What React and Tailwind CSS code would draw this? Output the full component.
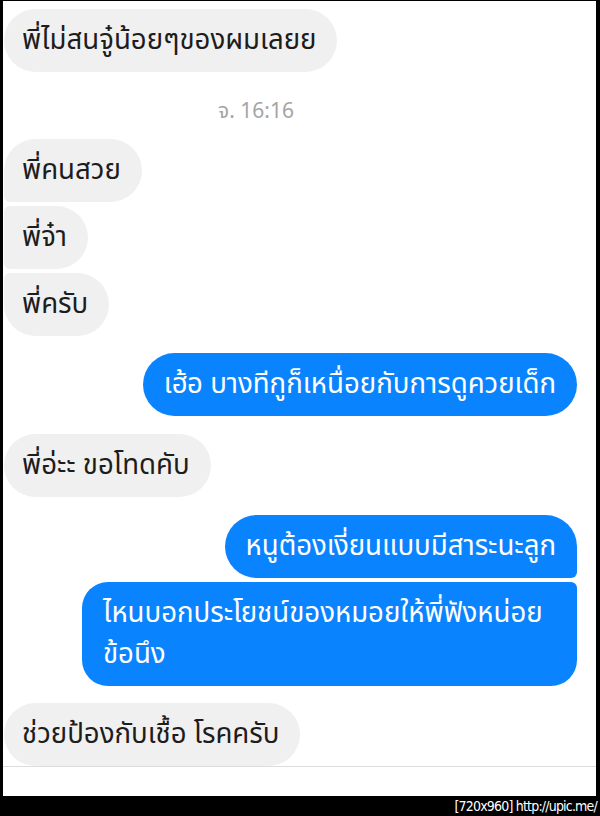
import React from "react";

const thai = { fontFamily: '"Noto Sans Thai", "Noto Sans", "DejaVu Sans", sans-serif' };

function Gray({ children, cls = "" }) {
  return (
    <div className="flex">
      <div className={`bg-[#f1f0f0] text-[#1d1d1d] text-[27.6px] leading-[41px] pl-[18px] pr-[21px] py-[11px] ${cls}`}>
        {children}
      </div>
    </div>
  );
}

function Blue({ children, cls = "" }) {
  return (
    <div className="flex justify-end pr-[19px]">
      <div className={`bg-[#0a84fe] text-white text-[27.6px] leading-[41px] pl-[21px] pr-[21px] py-[11px] ${cls}`}>
        {children}
      </div>
    </div>
  );
}

export default function App() {
  return (
    <div className="w-[600px] h-[816px] bg-black flex flex-col overflow-hidden" style={thai}>
      <div className="flex-1 mt-[1px] ml-[3px] mr-[4px] bg-white flex flex-col overflow-hidden">
        <div className="pl-[1px] pt-[8px] flex flex-col">
          <Gray cls="rounded-[32px]">พี่ไม่สนจู๋น้อยๆของผมเลยย</Gray>
          <div className="h-[28px] mt-[26px] mb-[13px] pl-[214px] text-[21px] leading-[28px] text-[#a5a5a5]">
            จ. 16:16
          </div>
          <div className="flex flex-col gap-[4px]">
            <Gray cls="rounded-[32px] rounded-bl-[6px]">พี่คนสวย</Gray>
            <Gray cls="rounded-[32px] rounded-l-[6px]">พี่จ๋า</Gray>
            <Gray cls="rounded-[32px] rounded-tl-[6px]">พี่ครับ</Gray>
          </div>
          <div className="mt-[17px]">
            <Blue cls="rounded-[32px]">เฮ้อ บางทีกูก็เหนื่อยกับการดูควยเด็ก</Blue>
          </div>
          <div className="mt-[18px]">
            <Gray cls="rounded-[32px]">พี่อ่ะะ ขอโทดคับ</Gray>
          </div>
          <div className="mt-[18px] flex flex-col gap-[4px]">
            <Blue cls="rounded-[32px] rounded-br-[6px]">หนูต้องเงี่ยนแบบมีสาระนะลูก</Blue>
            <Blue cls="w-[495px] rounded-[26px] rounded-tr-[6px]">
              ไหนบอกประโยชน์ของหมอยให้พี่ฟังหน่อย
              <br />
              ข้อนึง
            </Blue>
          </div>
          <div className="mt-[17px]">
            <Gray cls="rounded-[32px]">ช่วยป้องกับเชื้อ โรคครับ</Gray>
          </div>
        </div>
        <div className="mt-auto h-[30px] border-t border-[#dcdcdc]"></div>
      </div>
      <div className="h-[20px] flex items-center justify-end pr-[3px] text-white text-[14px] tracking-[-0.8px] leading-[20px]" style={{ fontFamily: '"DejaVu Sans Condensed", "DejaVu Sans", sans-serif' }}>
        [720x960] http://upic.me/
      </div>
    </div>
  );
}
